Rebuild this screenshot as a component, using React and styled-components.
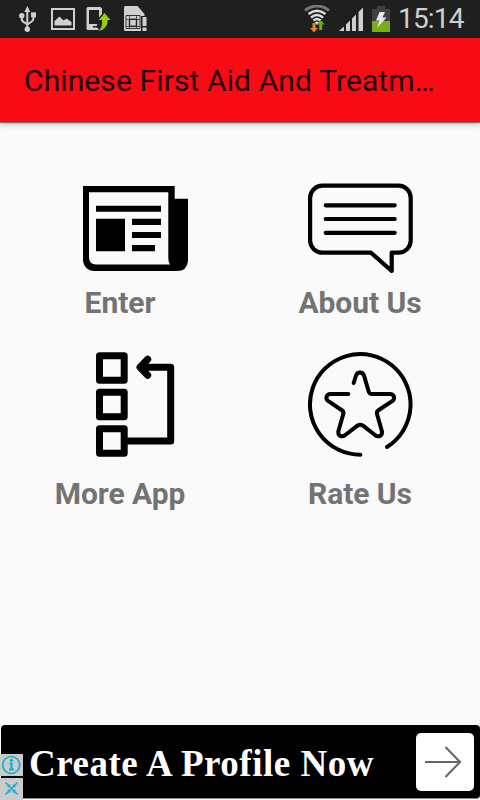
import React from "react"
import styled, { createGlobalStyle } from "styled-components"

const GlobalStyle = createGlobalStyle`
    * {
        box-sizing: border-box;
    }
    body {
        margin: 0;
        background: #fafafa;
        font-family: Roboto, sans-serif;
    }
    svg {
        display: block;
    }
`
const Screen = styled.div`
    width: 480px;
    height: 800px;
    display: flex;
    flex-direction: column;
    overflow: hidden;
    background: #fafafa;
`
const StatusBar = styled.header`
    height: 38px;
    flex: none;
    display: flex;
    align-items: center;
    justify-content: space-between;
    padding: 0 16px 0 18px;
    background: #1f1f1f;
`
const StatusGroup = styled.div`
    display: flex;
    align-items: center;
    gap: ${({ $gap }) => $gap}px;
`
const Clock = styled.span`
    font-size: 28px;
    line-height: 38px;
    width: 66px;
    margin-left: -1px;
    letter-spacing: -0.8px;
    white-space: nowrap;
    color: #cfcfcf;
`
const AppBar = styled.div`
    height: 84px;
    flex: none;
    display: flex;
    align-items: center;
    padding: 2px 24px 0;
    background: #f90b15;
    box-shadow: 0 1px 1px rgba(0, 0, 0, 0.45), 0 2px 6px rgba(0, 0, 0, 0.28);
`
const Title = styled.h1`
    margin: 0;
    font-size: 30px;
    font-weight: 400;
    line-height: 36px;
    letter-spacing: 0.11px;
    white-space: nowrap;
    color: #240003;
`
const Menu = styled.main`
    flex: 1;
    display: grid;
    grid-template-columns: 240px 240px;
    grid-template-rows: 176px 176px;
    padding-top: 54px;
`
const MenuItem = styled.div`
    display: flex;
    flex-direction: column;
    align-items: center;
    gap: ${({ $gap }) => $gap}px;
`
const MenuIcon = styled.svg`
    width: 105px;
    height: 105px;
    margin-left: ${({ $shift }) => $shift || 0}px;
    fill: none;
    stroke: #000;
    stroke-width: ${({ $weight }) => $weight || 0};
    stroke-linecap: round;
    stroke-linejoin: round;
`
const Label = styled.span`
    font-size: 30px;
    font-weight: 700;
    line-height: 35px;
    letter-spacing: -0.05px;
    color: #737373;
`
const AdBanner = styled.footer`
    position: relative;
    height: 74px;
    flex: none;
    display: flex;
    align-items: center;
    justify-content: space-between;
    margin: 0 0 1px 1px;
    padding: 0 6px 0 28px;
    border-radius: 4px;
    border-bottom: 1px solid #8a8a8a;
    background: #000;
`
const AdText = styled.span`
    font-family: "Liberation Serif", serif;
    font-size: 37px;
    font-weight: 700;
    line-height: 44px;
    letter-spacing: 0.52px;
    padding-top: 4px;
    white-space: nowrap;
    color: #fff;
`
const AdButton = styled.div`
    width: 58px;
    height: 58px;
    display: flex;
    align-items: center;
    padding-left: 9px;
    border-radius: 5px;
    background: #fff;
`
const AdBadges = styled.div`
    position: absolute;
    left: -1px;
    bottom: -2px;
    width: 23px;
    display: grid;
    gap: 2px;
`
const Badge = styled.div`
    height: 22px;
    background: #cbcbcb;
`

const UsbIcon = () => (
    <svg width="18" height="26" viewBox="0 0 18 26" fill="none" stroke="#cfcfcf" strokeWidth="2">
        <path d="M9.3 5V23M3.8 10V13Q3.8 15.5 6.5 16.5L9.3 18.5L13 16Q15.5 14.5 15.5 12V9" />
        <path d="M9.3 0L12.3 6H6.3Z" fill="#cfcfcf" stroke="none" />
        <circle cx="3.8" cy="9.8" r="2.7" fill="#cfcfcf" stroke="none" />
        <path d="M13 6.3H18V11.3H13Z" fill="#cfcfcf" stroke="none" />
        <circle cx="9.3" cy="23.3" r="2.7" fill="#cfcfcf" stroke="none" />
    </svg>
)

const PictureIcon = () => (
    <svg width="24" height="26" viewBox="-2 0 24 26" overflow="visible">
        <rect x="1" y="3" width="22" height="20" fill="none" stroke="#cfcfcf" strokeWidth="2" />
        <path d="M3.5 19.5V15L8.5 10.5L12.5 14.5L15.5 12.5L20.5 16V19.5Z" fill="#cfcfcf" />
    </svg>
)

const PhoneUpdateIcon = () => (
    <svg width="25" height="26" viewBox="0 0 25 26">
        <path d="M2 1H14.5L16 2.5V8L13 11.5V4H3V18H11.5L10.5 20H7V21.5H10.5L13 23L12 24H2Q.5 24 .5 22.5V2.5Q.5 1 2 1Z" fill="#cfcfcf" />
        <path d="M18.5 7L24.5 14H21.7Q22 23 12.5 25Q17 21 16 14H12.8Z" fill="#98cc0b" />
    </svg>
)

const SimIcon = () => (
    <svg width="23" height="26" viewBox="0 0 23 26">
        <path d="M1.5 0H13.5L20.5 8V10H17V25H1.5Q0 25 0 23.5V1.5Q0 0 1.5 0Z" fill="#cfcfcf" />
        <path d="M2.5 13.5H5.5V9.5M2.5 20.5H5.5V22.5M16 13.5H12.5V9.5M16 20.5H12.5V22.5" fill="none" stroke="#555" />
        <rect x="5.5" y="13.3" width="7" height="7" fill="none" stroke="#222" strokeWidth="1.4" />
        <path d="M2 9.5H16V22.5H2Z" fill="none" stroke="#333" />
        <rect x="18.5" y="11" width="4" height="9" fill="#cfcfcf" />
        <rect x="18.5" y="21.5" width="4" height="3.5" fill="#cfcfcf" />
    </svg>
)

const WifiIcon = () => (
    <svg width="26" height="28" viewBox="0 0 26 28" fill="none" strokeWidth="2.4">
        <path d="M1 5.5Q13 -3.5 25 5.5" stroke="#777" strokeWidth="3" />
        <path d="M4.5 9Q13 2.5 21.5 9M7 12.5Q13 7.5 19 12.5M9.5 15.5Q13 12.5 16.5 15.5" stroke="#dedede" />
        <path d="M10.8 17.5Q13 15.7 15.2 17.5L13 20Z" fill="#dedede" />
        <path d="M8.5 18H11.5V23H14L10 27.5L6 23H8.5Z" fill="#e08428" />
        <path d="M16.7 15L20.7 19.5H18.2V25H15.2V19.5H12.8Z" fill="#6fac13" />
    </svg>
)

const SignalIcon = () => (
    <svg width="24" height="26" viewBox="0 0 24 26" fill="#cfcfcf">
        <path d="M0 25L5 20.5V25ZM7 25V18.5L11 14.5V25ZM13 25V12.5L17 8.5V25ZM19.5 25V6L24 1.5V25Z" />
    </svg>
)

const BatteryIcon = () => (
    <svg width="18" height="26" viewBox="0 0 18 26">
        <path d="M5 0H13V3H18V26H0V3H5Z" fill="#404040" />
        <path d="M0 15H18V26H0Z" fill="#77ad17" />
        <path d="M7.5 6H13L10.5 11.5H14.5L5 22L7.5 14.5H4Z" fill="#e6e6e6" />
    </svg>
)

const NewsIcon = () => (
    <MenuIcon viewBox="0 0 105 105" $shift={30}>
        <path
            fill="#000"
            fillRule="evenodd"
            d="M0 10H91.7V22.7H105V85Q104 95 94 95H11Q1.5 94.5 0 85ZM6 16.3V82Q6.5 88.5 13 88.5H87Q85.3 86 85.3 82V16.3Z"
        />
        <path fill="#000" d="M13 29.7H78V35.7H13ZM13 42.7H42V75.3H13ZM49 42.7H78V49H49ZM49 56H78V62H49ZM49 69H72V75.3H49Z" />
    </MenuIcon>
)

const ChatIcon = () => (
    <MenuIcon viewBox="0 0 105 105" $weight={4.2}>
        <path d="M14.5 9.7H90.5A12.2 12.2 0 0 1 102.7 22V64.5A12.2 12.2 0 0 1 90.5 76.7H83.7V95L63 76.7H14.5A12.4 12.4 0 0 1 2.1 64.5V22A12.4 12.4 0 0 1 14.5 9.7Z" />
        <path d="M17.7 29.3H86.7M17.7 43H86.7M17.7 56.8H86.7" />
    </MenuIcon>
)

const FlowIcon = () => (
    <MenuIcon viewBox="0 0 105 105" $shift={30} $weight={7}>
        <path d="M16.5 3.8H41.2V28.3H16.5ZM16.5 40.2H41.2V64.7H16.5ZM16.5 76.8H41.2V101.3H16.5Z" />
        <path d="M44.7 89H87.7V15.3H57.5M64.7 7.3L57 15.3L64.7 23.3" />
    </MenuIcon>
)

const StarIcon = () => (
    <MenuIcon viewBox="0 0 105 105" $weight={4}>
        <path d="M52.4 102.7A50.3 50.3 0 1 1 79 95" />
        <path d="M45.7 31L48 23.5C49.5 19.5 54.5 19.5 56 23.5L60.7 39.5Q61.5 42 64 42H82C86 42 87.5 46.5 84.5 48.8L70.8 58Q68.3 59.7 69 62L74 79.5C74.5 84 70.5 85.5 67 83L55 73.7Q52.2 72 49.4 73.7L37.3 83C33.8 85.5 29.8 84 30.3 79.5L35.3 62Q36 59.7 33.5 58L20 48.8C17 46.5 18.5 42 22.5 42H40.3" />
    </MenuIcon>
)

const items = [
    { label: "Enter", Icon: NewsIcon, gap: 4 },
    { label: "About Us", Icon: ChatIcon, gap: 4 },
    { label: "More App", Icon: FlowIcon, gap: 19 },
    { label: "Rate Us", Icon: StarIcon, gap: 19 },
]

const App = () => (
    <>
        <GlobalStyle />
        <Screen>
            <StatusBar>
                <StatusGroup $gap={13}>
                    <UsbIcon />
                    <PictureIcon />
                    <PhoneUpdateIcon />
                    <SimIcon />
                </StatusGroup>
                <StatusGroup $gap={9}>
                    <WifiIcon />
                    <SignalIcon />
                    <BatteryIcon />
                    <Clock>15:14</Clock>
                </StatusGroup>
            </StatusBar>
            <AppBar>
                <Title>Chinese First Aid And Treatm…</Title>
            </AppBar>
            <Menu>
                {items.map(({ label, Icon, gap }) => (
                    <MenuItem key={label} $gap={gap}>
                        <Icon />
                        <Label>{label}</Label>
                    </MenuItem>
                ))}
            </Menu>
            <AdBanner>
                <AdText>Create A Profile Now</AdText>
                <AdButton>
                    <svg width="36" height="32" viewBox="0 0 36 32" fill="none" stroke="#666" strokeWidth="2">
                        <path d="M0 16H35M20.5 1L35 16L20.5 31" />
                    </svg>
                </AdButton>
                <AdBadges>
                    <Badge>
                        <svg width="23" height="22" viewBox="0 0 23 22" fill="none" stroke="#12afcf">
                            <circle cx="11.2" cy="11" r="8.5" strokeWidth="1.7" />
                            <path d="M9.5 9.5H11.5V15.5M9 15.5H14" strokeWidth="2.2" />
                            <circle cx="11.5" cy="6.3" r="1.6" fill="#12afcf" stroke="none" />
                        </svg>
                    </Badge>
                    <Badge>
                        <svg width="23" height="22" viewBox="0 0 23 22" fill="none" stroke="#12afcf" strokeWidth="1.6">
                            <path d="M5.5 4.5L17.5 16.5M17.5 4.5L5.5 16.5M7.5 8.5H9.5V6.5M13.5 6.5V8.5H15.5M7.5 12.5H9.5V14.5M13.5 14.5V12.5H15.5" />
                        </svg>
                    </Badge>
                </AdBadges>
            </AdBanner>
        </Screen>
    </>
)

export default App
